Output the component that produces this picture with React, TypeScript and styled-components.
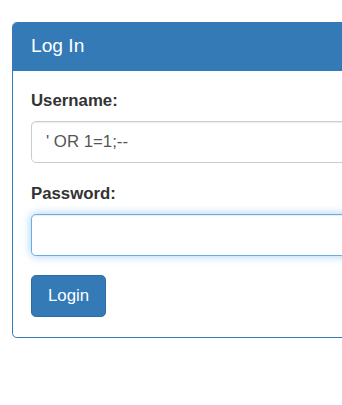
import styled, { createGlobalStyle } from 'styled-components';

const GlobalStyle = createGlobalStyle`
  html, body {
    margin: 0;
    padding: 0;
    overflow: hidden;
    background: #fff;
  }
  * {
    box-sizing: border-box;
  }
`;

const App = () => {
  return (
    <>
      <GlobalStyle />
      <Page>
        <Panel>
          <PanelHeading>
            <PanelTitle>Log In</PanelTitle>
          </PanelHeading>
          <PanelBody>
            <FormGroup>
              <Label htmlFor='username'>Username:</Label>
              <Input id='username' type='text' defaultValue="' OR 1=1;--" />
            </FormGroup>
            <FormGroup>
              <Label htmlFor='password'>Password:</Label>
              <Input id='password' type='password' focused />
            </FormGroup>
            <Button type='button'>Login</Button>
          </PanelBody>
        </Panel>
      </Page>
    </>
  );
};

export default App;

const Page = styled.div`
  width: 342px;
  height: 405px;
  padding: 22px 0 0 12px;
  font-family: 'Liberation Sans', Arial, sans-serif;
  font-size: 16.8px;
  line-height: 1.42857;
  color: #333;
`;

const Panel = styled.div`
  width: 440px;
  border: 1px solid #337ab7;
  border-radius: 4.8px;
  background: #fff;
`;

const PanelHeading = styled.div`
  height: 48px;
  padding: 12px 18px;
  background: #337ab7;
  border-bottom: 1px solid #337ab7;
  border-top-left-radius: 3.6px;
  border-top-right-radius: 3.6px;
`;

const PanelTitle = styled.h3`
  margin: 0;
  font-size: 19.2px;
  font-weight: 400;
  line-height: 1.1;
  color: #fff;
`;

const PanelBody = styled.div`
  padding: 18px 18px 20px;
`;

const FormGroup = styled.div`
  margin-bottom: 19px;
`;

const Label = styled.label`
  display: block;
  margin-bottom: 8px;
  font-weight: 700;
`;

const Input = styled.input<{ focused?: boolean }>`
  display: block;
  width: 100%;
  height: 42px;
  padding: 7px 14px;
  font-family: inherit;
  font-size: 16.8px;
  color: #555;
  background: #fff;
  border: 1px solid ${({ focused }) => (focused ? '#66afe9' : '#ccc')};
  border-radius: 4.8px;
  outline: none;
  box-shadow: ${({ focused }) =>
    focused
      ? 'inset 0 1px 1px rgba(0,0,0,.075), 0 0 9.6px rgba(102,175,233,.6)'
      : 'inset 0 1px 1px rgba(0,0,0,.075)'};
`;

const Button = styled.button`
  display: block;
  height: 42px;
  padding: 7px 16px;
  font-family: inherit;
  font-size: 16.8px;
  line-height: 1.42857;
  color: #fff;
  background: #337ab7;
  border: 1px solid #2e6da4;
  border-radius: 4.8px;
  cursor: pointer;
`;
